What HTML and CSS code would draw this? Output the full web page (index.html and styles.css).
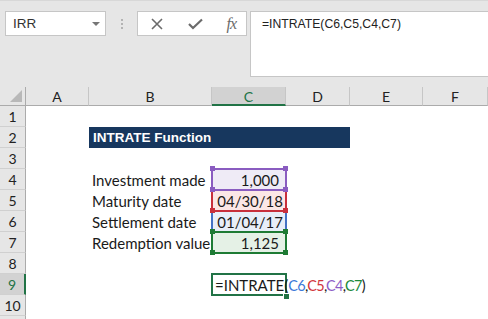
FILE: index.html
```html
<!DOCTYPE html>
<html lang="en">
<head>
<meta charset="utf-8">
<title>INTRATE Function</title>
<link rel="stylesheet" href="styles.css">
</head>
<body>

<div class="toolbar">
	<div class="name_box"><span>IRR</span><i class="drop"></i></div>
	<div class="grip"><i></i><i></i><i></i></div>
	<div class="fn_box">
		<svg class="ico" width="14" height="14" viewBox="0 0 14 14"><path d="M2 2 L12 12 M12 2 L2 12" stroke="#6b6b6b" stroke-width="1.6" fill="none"/></svg>
		<svg class="ico" width="15" height="12" viewBox="0 0 15 12"><path d="M1 6 L5 10 L14 1.5" stroke="#6b6b6b" stroke-width="2.2" fill="none"/></svg>
		<span class="fx">fx</span>
	</div>
	<div class="formula_bar">=INTRATE(C6,C5,C4,C7)</div>
</div>

<div class="sheet">
	<!-- headers -->
	<div class="corner"></div>
	<div class="col_head">A</div>
	<div class="col_head">B</div>
	<div class="col_head on">C</div>
	<div class="col_head">D</div>
	<div class="col_head">E</div>
	<div class="col_head">F</div>

	<div class="row_head">1</div><div></div><div></div><div></div><div></div><div></div><div></div>

	<div class="row_head">2</div><div></div>
	<div class="title">INTRATE Function</div>
	<div></div><div></div>

	<div class="row_head">3</div><div></div><div></div><div></div><div></div><div></div><div></div>

	<div class="row_head">4</div><div></div>
	<div class="label">Investment made</div>
	<div class="val num rng purple">1,000</div>
	<div></div><div></div><div></div>

	<div class="row_head">5</div><div></div>
	<div class="label">Maturity date</div>
	<div class="val rng red">04/30/18</div>
	<div></div><div></div><div></div>

	<div class="row_head">6</div><div></div>
	<div class="label">Settlement date</div>
	<div class="val rng blue">01/04/17</div>
	<div></div><div></div><div></div>

	<div class="row_head">7</div><div></div>
	<div class="label">Redemption value</div>
	<div class="val num rng green">1,125</div>
	<div></div><div></div><div></div>

	<div class="row_head">8</div><div></div><div></div><div></div><div></div><div></div><div></div>

	<div class="row_head on">9</div><div></div><div></div>
	<div class="active">=INTRATE(<span class="refs"><span class="c_blue">C6</span>,<span class="c_red">C5</span>,<span class="c_purple">C4</span>,<span class="c_green">C7</span>)</span><i class="caret"></i></div>
	<div></div><div></div><div></div>

	<div class="row_head">10</div><div></div><div></div><div></div><div></div><div></div><div></div>
	<div class="row_head"></div><div></div><div></div><div></div><div></div><div></div><div></div>
</div>

</body>
</html>
```

FILE: styles.css
```css
body,div,span,i{margin:0;padding:0;}
body{width:488px;height:319px;overflow:hidden;background:#fff;font-family:"Lato","Liberation Sans",sans-serif;color:#1a1a1a;}
i{display:block;font-style:normal;}

/* formula toolbar */
.toolbar{display:flex;align-items:flex-start;height:87px;box-sizing:border-box;padding:11px 0 0 5px;background:#e6e6e6;border-top:1px solid #d8d8d8;}
.name_box{display:flex;align-items:center;justify-content:space-between;width:101px;height:25px;box-sizing:border-box;margin-top:-1px;padding:0 5px 0 7px;border:1px solid #c6c6c6;background:#fff;font-family:"Liberation Sans",sans-serif;font-size:13.5px;color:#333;}
.name_box .drop{width:0;height:0;border-left:4px solid transparent;border-right:4px solid transparent;border-top:4px solid #767676;}
.grip{display:flex;flex-direction:column;gap:2px;width:2px;margin:7px 14px 0 15px;}
.grip i{width:2px;height:2px;background:#b3b3b3;}
.fn_box{display:flex;align-items:center;justify-content:space-between;width:110px;height:25px;box-sizing:border-box;margin-top:-1px;padding:0 10px 0 12px;border:1px solid #c6c6c6;background:#fff;}
.fn_box .fx{font-family:"Liberation Serif",serif;font-style:italic;font-size:16px;color:#6b6b6b;letter-spacing:-1px;}
.formula_bar{flex:1;height:66px;box-sizing:border-box;margin:-1px 0 0 3px;padding:5px 0 0 11px;border:1px solid #c6c6c6;border-right:none;background:#fff;font-family:"Liberation Sans",sans-serif;font-size:12.2px;color:#222;}

/* sheet grid */
.sheet{display:grid;grid-template-columns:26px 63px 123px 74px 64px 73px 65px;grid-template-rows:19px;grid-auto-rows:21px;font-size:15px;}
.sheet > div{box-sizing:border-box;white-space:nowrap;}
.corner{position:relative;background:#e6e6e6;border-right:1px solid #ababab;border-bottom:1px solid #ababab;}
.corner:after{content:'';position:absolute;right:3px;bottom:3px;width:0;height:0;border-left:12px solid transparent;border-bottom:12px solid #b8b8b8;}
.col_head{display:flex;align-items:center;justify-content:center;padding-top:1px;background:#e6e6e6;border-right:1px solid #c6c6c6;border-bottom:1px solid #ababab;font-size:14px;color:#222;}
.col_head.on{background:#d2d2d2;border-bottom:2px solid #217346;color:#217346;}
.row_head{display:flex;align-items:center;justify-content:center;background:#e6e6e6;border-right:1px solid #ababab;border-bottom:1px solid #d0d0d0;font-size:14px;color:#222;}
.row_head.on{background:#d2d2d2;border-right:2px solid #217346;color:#217346;}

.title{grid-column:span 3;display:flex;align-items:center;padding-left:4px;background:#17375e;color:#fff;font-family:"Liberation Sans",sans-serif;font-weight:bold;font-size:13.5px;}
.label{padding:1px 0 0 3px;line-height:21px;}
.val{text-align:right;padding:1px 3px 0 0;line-height:21px;}
.val.num{padding-right:7px;}

/* reference ranges */
.rng{position:relative;}
.rng:before{content:'';position:absolute;left:-1px;top:-1px;right:-1px;bottom:-1px;border:2px solid var(--c);}
.rng:after{content:'';position:absolute;left:-2px;top:-3px;width:5px;height:5px;background:var(--c);box-shadow:73px 0 var(--c),0 21px var(--c),73px 21px var(--c);}
.purple{--c:#8a5cc0;background:#efebf6;z-index:3;}
.red{--c:#c8303c;background:#fbe7e6;z-index:2;}
.blue{--c:#4472c4;background:#e8eef8;z-index:1;}
.green{--c:#1e7b34;background:#e5f1e6;z-index:3;}

/* active cell */
.active{position:relative;display:flex;align-items:center;padding:1px 0 0 3px;line-height:21px;z-index:4;}
.active:before{content:'';position:absolute;left:-1px;top:-1px;width:76px;height:23px;box-sizing:border-box;border:2px solid #217346;z-index:-1;}
.active:after{content:'';position:absolute;left:71px;top:19px;width:5px;height:5px;background:#217346;border:1px solid #fff;}
.refs{font-size:14.5px;letter-spacing:-0.7px;}
.c_blue{color:#3b78d8;}
.c_red{color:#d1343b;}
.c_purple{color:#8e5cc6;}
.c_green{color:#1b8a3c;}
.caret{width:1px;height:17px;margin-left:3px;background:#8a8a8a;}
```
